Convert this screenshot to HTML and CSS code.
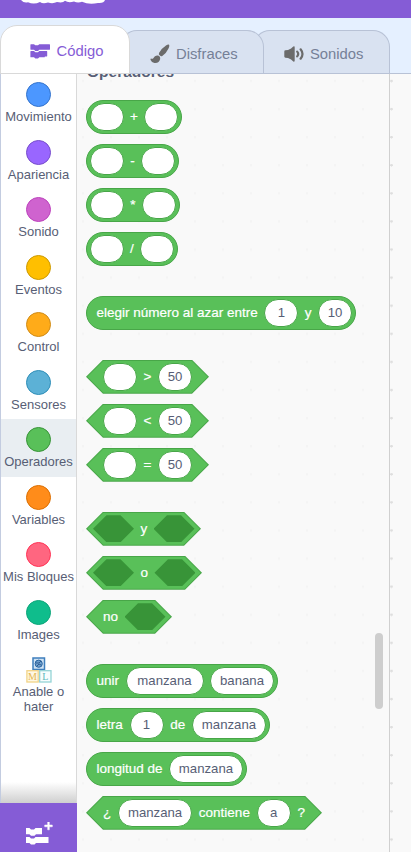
FILE: index.html
```html
<!DOCTYPE html>
<html lang="es">
<head>
<meta charset="utf-8">
<title>Editor de bloques</title>
<link rel="stylesheet" href="styles.css">
</head>
<body>
<div class="app">
  <header class="topbar">
    <svg class="logo" width="86" height="5" viewBox="0 0 86 5"><path fill="#fff" d="M0 0Q3 3.5 7 2.3Q13 5 19 2Q22 4.3 27 2.5Q32 4 36 2Q42 3.2 44 .8Q47 3 53 1.6Q57 3.4 61 1.8Q68 5 77 3Q83 3.5 84 0Z"/></svg>
  </header>
  <nav class="tabs">
    <div class="tab tab-code">
      <svg width="21" height="16" viewBox="0 0 21 16" fill="#855cd6"><path d="M.8 1.300H4L5.300 2.300H8L9.300 1.300H19.600q.4 0 .4.400V6.300q0 .4-.4.400H9.300L8 7.900H5.300L4 6.700H.8q-.4 0-.4-.4V1.700q0-.4.4-.4Z"/><path d="M.8 8H4L5.300 9.200H8L9.300 8H16.800q.4 0 .4.400V13q0 .4-.4.400H14.800V14q0 .3-.4.300H9.300L8 15.500H5.300L4 14.300H.8q-.4 0-.4-.4V8.400Q.4 8 .8 8Z"/></svg>
      <span>Código</span>
    </div>
    <div class="tab tab-costumes">
      <svg width="20" height="20" viewBox="0 0 20 20" fill="#6b6b6b"><path d="M18.700 .6Q20 1.500 18.500 4.500Q16.500 9 12.300 12Q11 12.800 9.900 11.500Q8.300 10.500 9 8.900Q11.500 4.500 16 1.600Q18 .2 18.700 .6Z"/><path d="M8 11.500Q10.700 12.500 10.100 15.300Q9.200 19.300 4.500 18.900Q1.500 18.500.6 16Q.2 14.500 1 14.400Q2.400 15.500 3.500 14Q4.800 10.900 8 11.500Z"/></svg>
      <span>Disfraces</span>
    </div>
    <div class="tab tab-sounds">
      <svg width="20" height="16" viewBox="0 0 20 16"><path fill="#6b6b6b" d="M.3 5.500Q.3 4.400 1.400 4.300L4 4Q7.500 2.800 9.300.6Q10.700-.3 10.700 1.400V14.600Q10.700 16.300 9.300 15.400Q7.500 13.200 4 12L1.400 11.700Q.3 11.600.3 10.500Z"/><path d="M13.200 5.600q2 2.400 0 4.800M16.600 3.300q3.800 4.700 0 9.400" fill="none" stroke="#6b6b6b" stroke-width="2.200" stroke-linecap="round"/></svg>
      <span>Sonidos</span>
    </div>
  </nav>
  <main class="workspace">
    <aside class="sidebar">
      <div class="categories">
        <div class="category"><i class="dot motion"></i><span>Movimiento</span></div>
        <div class="category"><i class="dot looks"></i><span>Apariencia</span></div>
        <div class="category"><i class="dot sound"></i><span>Sonido</span></div>
        <div class="category"><i class="dot events"></i><span>Eventos</span></div>
        <div class="category"><i class="dot control"></i><span>Control</span></div>
        <div class="category"><i class="dot sensing"></i><span>Sensores</span></div>
        <div class="category selected"><i class="dot operators"></i><span>Operadores</span></div>
        <div class="category"><i class="dot variables"></i><span>Variables</span></div>
        <div class="category"><i class="dot myblocks"></i><span>Mis Bloques</span></div>
        <div class="category"><i class="dot images"></i><span>Images</span></div>
        <div class="category ml">
          <svg width="26" height="26" viewBox="0 0 26 26"><rect x="7" y="1" width="11.500" height="11.500" fill="#cfe2f3" stroke="#3f7fbd" stroke-width="1.500"/><circle cx="12.700" cy="6.700" r="3.600" fill="#6fa0ce" stroke="#28629e" stroke-width="1"/><path d="M10 6h3l2-2M11 9l2-2 2 1" fill="none" stroke="#28558a" stroke-width=".9"/><rect x=".9" y="13.700" width="11.300" height="11.300" fill="#fff8e4" stroke="#f2d488" stroke-width="1.300"/><rect x="13.700" y="13.700" width="11.300" height="11.300" fill="#f7fdfd" stroke="#96d4d6" stroke-width="1.300"/><text x="6.500" y="22.700" class="cube-letter gold">M</text><text x="19.300" y="22.700" class="cube-letter teal">L</text></svg>
          <span>Anable o<br>hater</span>
        </div>
      </div>
      <div class="extensions">
        <svg width="32" height="26" viewBox="0 0 32 26" fill="#fff"><path d="M1 6h3.500L6 7.500h3L10.500 6H17v6.200h-6L9.500 13.700H6L4.500 12.200H1ZM1 14.900h3.500L6 16.400h3l1.500-1.500H23.500v6.200H11L9.500 22.400H6L4.500 21.100H1Z"/><path d="M22.700 0h1.600v3h3v1.800h-3v3h-1.600v-3h-3V3h3Z" stroke="#fff" stroke-width=".5"/></svg>
      </div>
    </aside>
    <section class="flyout">
      <h2>Operadores</h2>
      <div class="group">
        <div class="block round w-plus"><b class="field"></b><span>+</span><b class="field"></b></div>
        <div class="block round w-minus"><b class="field"></b><span>-</span><b class="field"></b></div>
        <div class="block round w-times"><b class="field"></b><span>*</span><b class="field"></b></div>
        <div class="block round w-divide"><b class="field"></b><span>/</span><b class="field"></b></div>
      </div>
      <div class="group">
        <div class="block round text-start w-random"><span>elegir número al azar entre</span><b class="field">1</b><span>y</span><b class="field">10</b></div>
      </div>
      <div class="group">
        <div class="block hex w-compare"><b class="field"></b><span>&gt;</span><b class="field">50</b></div>
        <div class="block hex w-compare"><b class="field"></b><span>&lt;</span><b class="field">50</b></div>
        <div class="block hex w-compare"><b class="field"></b><span>=</span><b class="field">50</b></div>
      </div>
      <div class="group">
        <div class="block hex logic w-and"><i class="slot"></i><span>y</span><i class="slot"></i></div>
        <div class="block hex logic w-or"><i class="slot"></i><span>o</span><i class="slot"></i></div>
        <div class="block hex logic negate w-not"><span>no</span><i class="slot"></i></div>
      </div>
      <div class="group">
        <div class="block round text-start w-join"><span>unir</span><b class="field apple-wide">manzana</b><b class="field banana">banana</b></div>
        <div class="block round text-start w-letter"><span>letra</span><b class="field">1</b><span>de</span><b class="field apple">manzana</b></div>
        <div class="block round text-start w-length"><span>longitud de</span><b class="field apple">manzana</b></div>
        <div class="block hex w-contains"><span>¿</span><b class="field apple">manzana</b><span>contiene</span><b class="field">a</b><span>?</span></div>
      </div>
      <div class="scrollbar"></div>
    </section>
    <div class="canvas"></div>
  </main>
</div>
</body>
</html>
```

FILE: styles.css
```css
* { box-sizing: border-box; }
body {
  margin: 0;
  font-family: "Liberation Sans", Arial, sans-serif;
  color: #575e75;
}
.app {
  width: 411px;
  height: 852px;
  overflow: hidden;
  display: flex;
  flex-direction: column;
  background: #e5f0ff;
}
.topbar { height: 18px; flex: none; background: #855cd6; }
.logo { display: block; margin-left: 21px; }

.tabs {
  height: 56px;
  flex: none;
  display: flex;
  align-items: flex-end;
  border-bottom: 1px solid #b8c2d6;
}
.tab {
  display: flex;
  align-items: center;
  height: 43px;
  border: 1px solid #b8c2d6;
  border-bottom: 0;
  border-radius: 17px 17px 0 0;
  background: #d9e2f1;
  color: #758097;
  font-size: 14.800px;
  position: relative;
}
.tab svg { flex: none; }
.tab-code {
  z-index: 3;
  width: 130px;
  height: 49px;
  margin-bottom: -1px;
  padding: 3px 0 0 29px;
  gap: 5.500px;
  background: #fff;
  border: 1px solid #d9d9d9;
  color: #855cd6;
}
.tab-costumes { z-index: 2; width: 144px; margin-left: -10px; padding: 4px 0 0 29px; gap: 6px; }
.tab-sounds { z-index: 1; width: 137px; margin-left: -11px; padding: 4px 0 0 30px; gap: 6px; }

.workspace { flex: 1; min-height: 0; display: flex; background: #f9f9f9; }
.sidebar {
  width: 77px;
  flex: none;
  display: flex;
  flex-direction: column;
  background: #fff;
}
.categories {
  height: 729px;
  border-left: 1px solid #c3cce0;
  border-right: 1px solid #d9d9d9;
  background: linear-gradient(#fff 0 708px, #cfcfcf 729px);
}
.category {
  height: 57.500px;
  padding-top: 8px;
  display: flex;
  flex-direction: column;
  align-items: center;
  font-size: 13px;
  line-height: 17px;
  text-align: center;
  white-space: nowrap;
}
.category span { margin-top: 1px; }
.selected { background: #e9eef2; }
.dot { width: 25px; height: 25px; flex: none; border-radius: 50%; border: 1px solid; }
.motion { background: #4c97ff; border-color: #3373cc; }
.looks { background: #9966ff; border-color: #774dcb; }
.sound { background: #cf63cf; border-color: #bd42bd; }
.events { background: #ffbf00; border-color: #cc9900; }
.control { background: #ffab19; border-color: #cf8b17; }
.sensing { background: #5cb1d6; border-color: #2e8eb8; }
.operators { background: #59c059; border-color: #389438; }
.variables { background: #ff8c1a; border-color: #db6e00; }
.myblocks { background: #ff6680; border-color: #ff3355; }
.images { background: #0fbd8c; border-color: #0da57a; }
.ml { height: 76px; line-height: 15px; }
.cube-letter { font: 10px "Liberation Serif", serif; text-anchor: middle; }
.gold { fill: #e3b653; }
.teal { fill: #5fb8bb; }
.extensions { flex: 1; padding: 19px 0 0 25px; background: #855cd6; }
.extensions svg { display: block; }

.flyout {
  width: 313px;
  flex: none;
  position: relative;
  overflow: hidden;
  padding-left: 9px;
  border-right: 1px solid #d0d0d0;
  background: radial-gradient(circle at 6px 7px, #f4f4f4 1px, transparent 1.500px) 0 0 / 28px 28.100px;
}
.flyout h2 {
  margin: -11px 0 0 1px;
  height: 36.700px;
  font-size: 15.500px;
  line-height: 18px;
}
.group { display: flex; flex-direction: column; gap: 10px; margin-bottom: 30px; }
.block {
  height: 34px;
  display: flex;
  align-items: center;
  justify-content: space-between;
  color: #fff;
  font-size: 13.500px;
  white-space: nowrap;
}
.block span { -webkit-text-stroke: .2px #fff; }
.round {
  padding: 0 3px;
  border: 1px solid #48a648;
  border-radius: 17px;
  background: #59c059;
}
.text-start { padding-left: 9.500px; }
.hex {
  position: relative;
  z-index: 0;
  padding: 0 17px;
  background: #48a648;
  clip-path: polygon(17px 0, calc(100% - 17px) 0, 100% 50%, calc(100% - 17px) 100%, 17px 100%, 0 50%);
}
.hex::before {
  content: "";
  position: absolute;
  z-index: -1;
  inset: 1px 1.400px;
  background: #59c059;
  clip-path: polygon(16px 0, calc(100% - 16px) 0, 100% 50%, calc(100% - 16px) 100%, 16px 100%, 0 50%);
}
.logic { padding: 0 6.500px 0 7px; }
.negate { padding-left: 17px; }
.field {
  width: 34px;
  height: 28px;
  flex: none;
  border: 1px solid #48a648;
  border-radius: 14px;
  background: #fff;
  color: #575e75;
  font-size: 13.200px;
  font-weight: 400;
  display: flex;
  align-items: center;
  justify-content: center;
}
.apple { width: 74px; }
.apple-wide { width: 78px; }
.banana { width: 64px; }
.slot {
  width: 41px;
  height: 27px;
  flex: none;
  background: #389438;
  clip-path: polygon(13.500px 0, 27.500px 0, 100% 50%, 27.500px 100%, 13.500px 100%, 0 50%);
}
.w-plus { width: 96px; }
.w-minus { width: 93px; }
.w-times { width: 94px; }
.w-divide { width: 92px; }
.w-random { width: 270px; }
.w-compare { width: 123px; }
.w-and { width: 115px; }
.w-or { width: 116px; }
.w-not { width: 86px; }
.w-join { width: 192px; }
.w-letter { width: 184px; }
.w-length { width: 161px; }
.w-contains { width: 236px; }
.scrollbar {
  position: absolute;
  top: 559px;
  right: 6px;
  width: 8px;
  height: 76px;
  border-radius: 4px;
  background: #cecece;
}
.canvas {
  flex: 1;
  background: radial-gradient(circle at 1.500px 7px, #dedede 1px, transparent 1.600px) 0 0 / 28px 28.100px;
}
```
